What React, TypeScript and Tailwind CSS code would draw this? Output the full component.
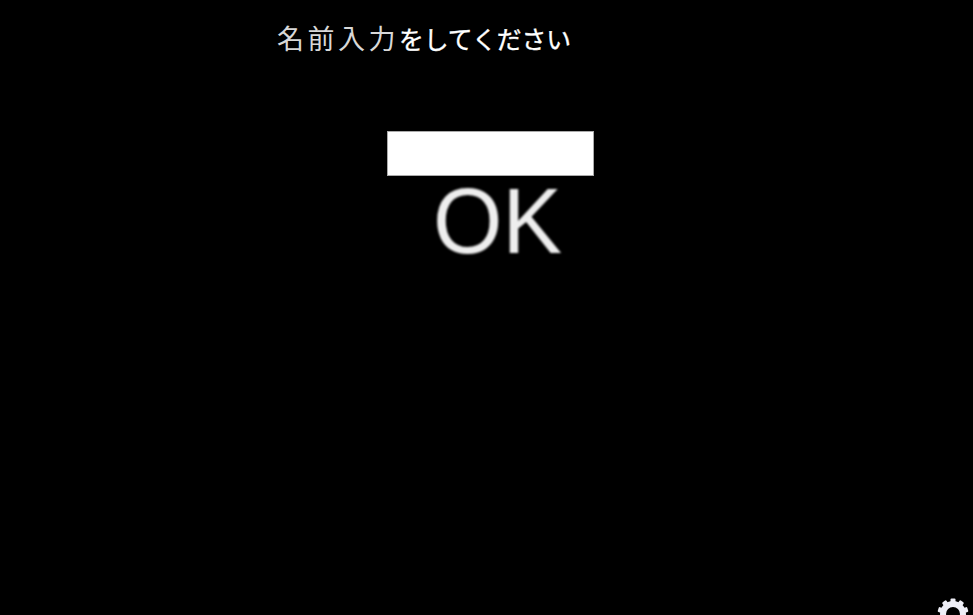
import React from "react";

function Gear() {
  const teeth = Array.from({ length: 10 }, (_, i) => i * 36);
  return (
    <svg width="36" height="36" viewBox="0 0 36 36" className="absolute left-[935px] top-[596px] blur-[0.7px]">
      <g fill="#eeeef6">
        {teeth.map((a) => (
          <rect key={a} x="15.5" y="2.5" width="5" height="6" rx="1" transform={`rotate(${a} 18 18)`} />
        ))}
      </g>
      <circle cx="18" cy="18" r="10" fill="none" stroke="#eeeef6" strokeWidth="6" />
    </svg>
  );
}

export default function App() {
  return (
    <div className="relative flex h-[615px] w-[973px] flex-col items-start overflow-hidden bg-black font-['Liberation_Sans','Noto_Sans_CJK_JP',sans-serif]">
      <h1 className="ml-[277px] mt-[21px] text-[26px] font-normal leading-[38px] whitespace-nowrap text-white">
        <span className="text-[27px] tracking-[3.5px] text-[#d8d8d8]">名前入力</span>
        <span className="text-[24.8px] [-webkit-text-stroke:0.35px_white]">をしてください</span>
      </h1>
      <input
        type="text"
        aria-label="名前"
        className="ml-[387px] mt-[71px] h-[45px] w-[207px] border border-[#aaa] bg-white outline-none"
      />
      <button className="ml-[433px] mt-0 origin-left scale-x-[0.96] text-[93px] leading-[90px] text-[#eee] blur-[1px]">
        OK
      </button>
      <Gear />
    </div>
  );
}
